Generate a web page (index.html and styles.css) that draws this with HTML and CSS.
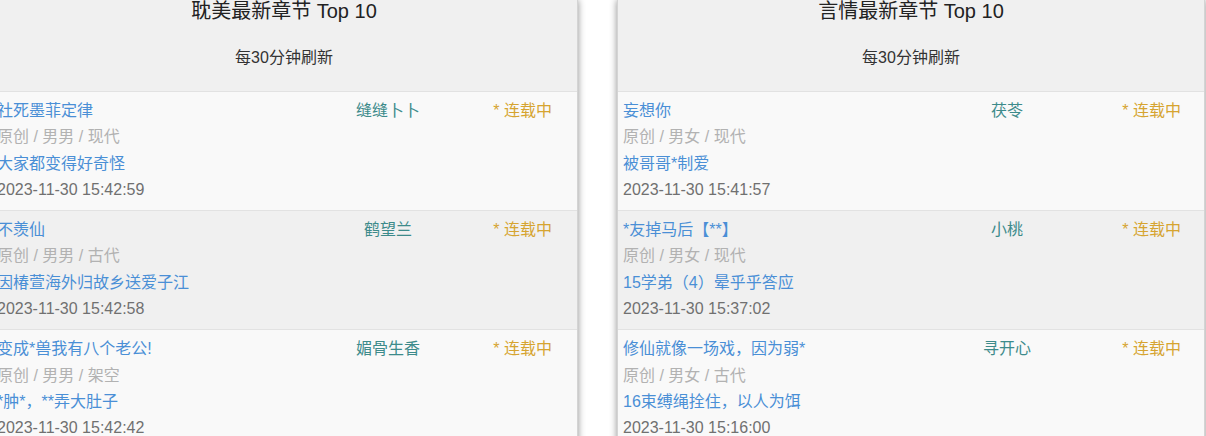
FILE: index.html
```html
<!DOCTYPE html>
<html lang="zh-CN">
<head>
    <meta charset="UTF-8">
    <meta name="viewport" content="width=device-width, initial-scale=1.0">
    <title>最新章节 Top 10</title>
    <link rel="stylesheet" href="styles.css">
</head>
<body>
    <div class="boards">
        <div class="panel">
            <div class="panel-head">
                <h2>耽美最新章节 Top 10</h2>
                <p class="refresh">每30分钟刷新</p>
            </div>
            <div class="row">
                <div class="info">
                    <a class="book" href="#">社死墨菲定律</a>
                    <div class="tags">原创 / 男男 / 现代</div>
                    <a class="chapter" href="#">大家都变得好奇怪</a>
                    <div class="time">2023-11-30 15:42:59</div>
                </div>
                <div class="author">缝缝卜卜</div>
                <div class="status">* 连载中</div>
            </div>
            <div class="row alt">
                <div class="info">
                    <a class="book" href="#">不羡仙</a>
                    <div class="tags">原创 / 男男 / 古代</div>
                    <a class="chapter" href="#">因椿萱海外归故乡送爱子江</a>
                    <div class="time">2023-11-30 15:42:58</div>
                </div>
                <div class="author">鹤望兰</div>
                <div class="status">* 连载中</div>
            </div>
            <div class="row">
                <div class="info">
                    <a class="book" href="#">变成*兽我有八个老公!</a>
                    <div class="tags">原创 / 男男 / 架空</div>
                    <a class="chapter" href="#">*肿*，**弄大肚子</a>
                    <div class="time">2023-11-30 15:42:42</div>
                </div>
                <div class="author">媚骨生香</div>
                <div class="status">* 连载中</div>
            </div>
        </div>

        <div class="panel panel-yq">
            <div class="panel-head">
                <h2>言情最新章节 Top 10</h2>
                <p class="refresh">每30分钟刷新</p>
            </div>
            <div class="row">
                <div class="info">
                    <a class="book" href="#">妄想你</a>
                    <div class="tags">原创 / 男女 / 现代</div>
                    <a class="chapter" href="#">被哥哥*制爱</a>
                    <div class="time">2023-11-30 15:41:57</div>
                </div>
                <div class="author">茯苓</div>
                <div class="status">* 连载中</div>
            </div>
            <div class="row alt">
                <div class="info">
                    <a class="book" href="#">*友掉马后【**】</a>
                    <div class="tags">原创 / 男女 / 现代</div>
                    <a class="chapter" href="#">15学弟（4）晕乎乎答应</a>
                    <div class="time">2023-11-30 15:37:02</div>
                </div>
                <div class="author">小桃</div>
                <div class="status">* 连载中</div>
            </div>
            <div class="row">
                <div class="info">
                    <a class="book" href="#">修仙就像一场戏，因为弱*</a>
                    <div class="tags">原创 / 男女 / 古代</div>
                    <a class="chapter" href="#">16束缚绳拴住，以人为饵</a>
                    <div class="time">2023-11-30 15:16:00</div>
                </div>
                <div class="author">寻开心</div>
                <div class="status">* 连载中</div>
            </div>
        </div>
    </div>
</body>
</html>
```

FILE: styles.css
```css
body {
    font-family: "Liberation Sans", Arial, "Noto Sans CJK SC", sans-serif;
    font-size: 16px;
    background-color: #fff;
    margin: 0;
    overflow: hidden;
}

.boards {
    display: flex;
    gap: 39px;
    margin-left: -10px;
}

.panel {
    width: 588px;
    flex-shrink: 0;
    background-color: #f9f9f9;
    border: 1px solid #d4d4d4;
    border-top: none;
    box-sizing: border-box;
    box-shadow: 0 0 7px rgba(0, 0, 0, 0.45);
}

.panel-head {
    background-color: #f0f0f0;
    border-bottom: 1px solid #e2e2e2;
    text-align: center;
    padding: 0 0 21px;
}

.panel-head h2 {
    margin: 0;
    font-size: 20px;
    font-weight: normal;
    line-height: 22px;
    color: #222;
}

.refresh {
    margin: 24px 0 0;
    line-height: 24px;
    color: #333;
}

.row {
    display: grid;
    grid-template-columns: 1fr 100px 133px;
    padding: 6px 6px 7px;
    border-bottom: 1px solid #e2e2e2;
    line-height: 26.3px;
}

.panel-yq .row {
    grid-template-columns: 1fr 100px 141px;
    padding-left: 5px;
}

.row.alt {
    background-color: #f0f0f0;
}

.info a,
.info div {
    display: block;
    white-space: nowrap;
}

.book,
.chapter {
    color: #4a8fd6;
    text-decoration: none;
}

.tags {
    color: #b2b2b2;
}

.time {
    color: #707070;
}

.author {
    color: #3d8b8b;
    text-align: center;
}

.status {
    color: #d6a430;
    text-align: right;
    padding-right: 19px;
}

.panel-yq .status {
    padding-right: 17px;
}
```
